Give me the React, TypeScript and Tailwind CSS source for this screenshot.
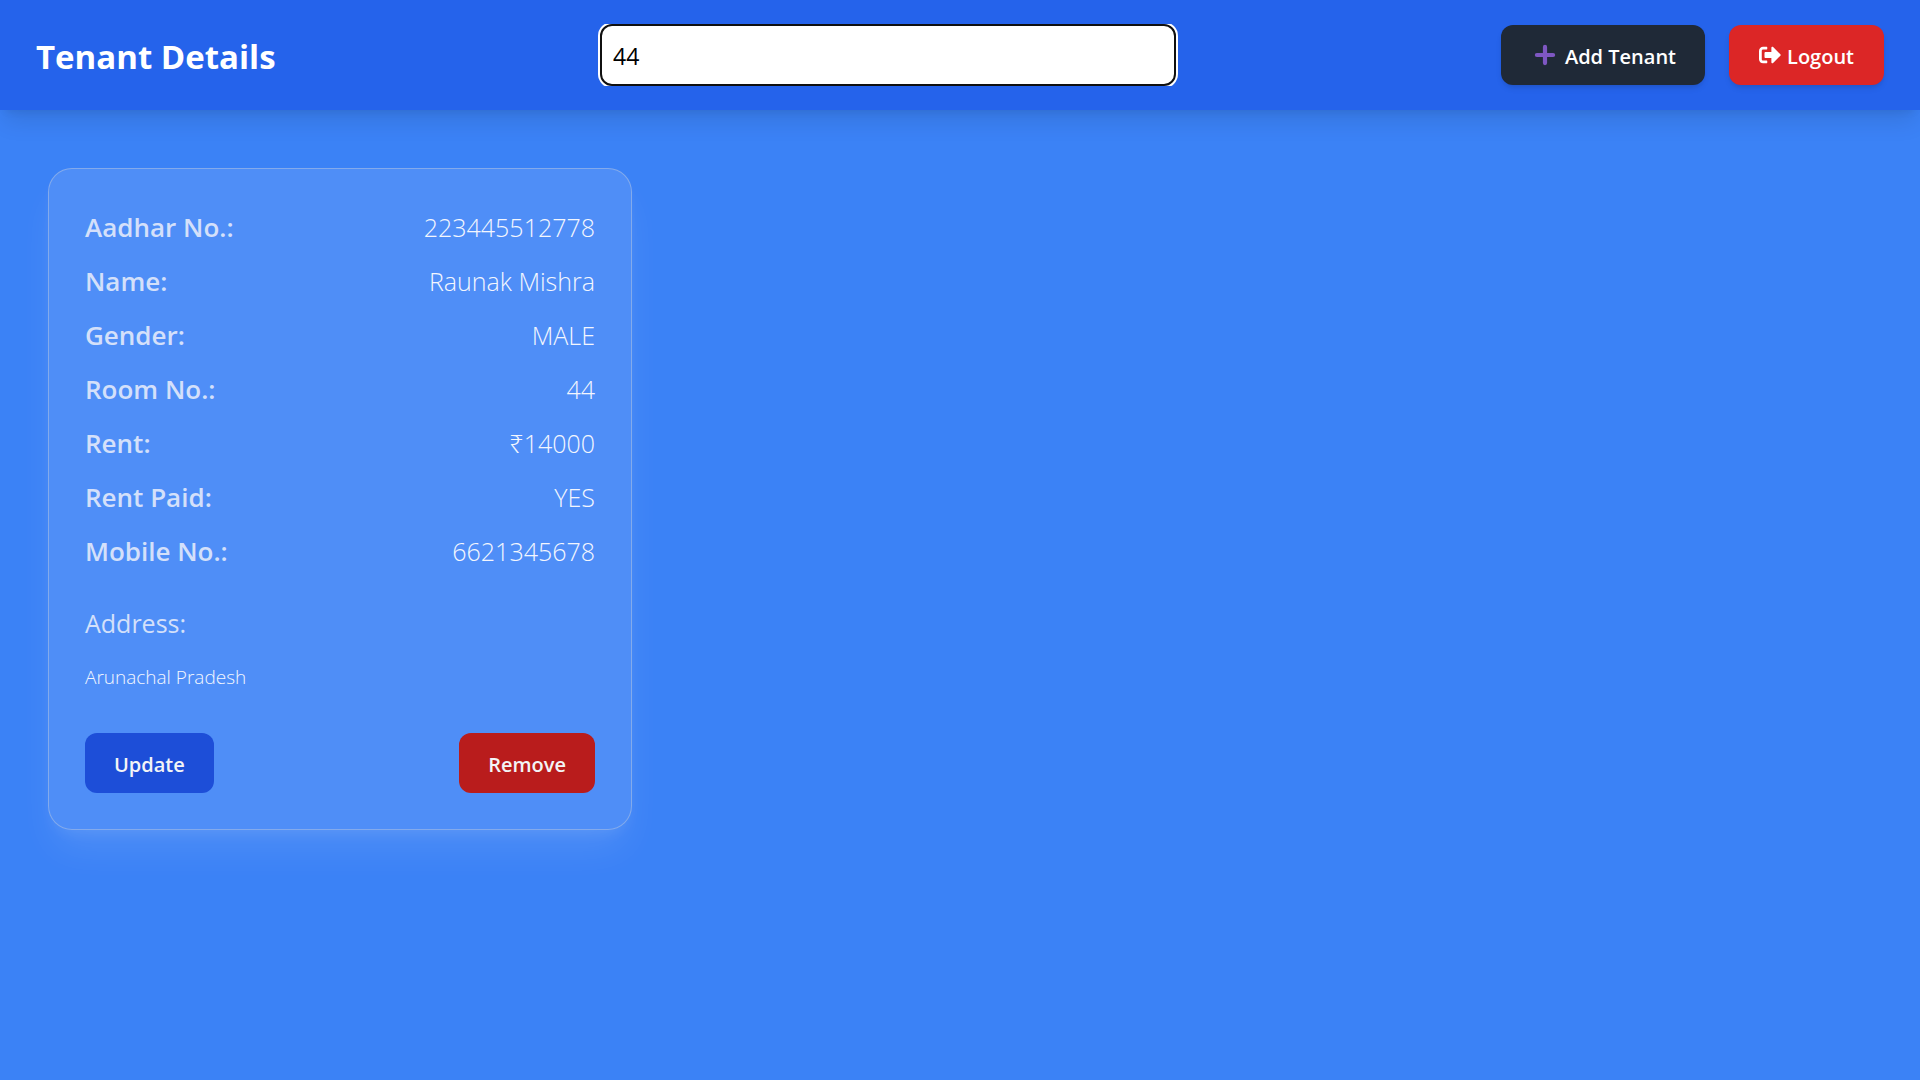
import { useState } from "react";
import { FaSignOutAlt } from "react-icons/fa";

const details = [
  ["Aadhar No.:", "223445512778"],
  ["Name:", "Raunak Mishra"],
  ["Gender:", "MALE"],
  ["Room No.:", "44"],
  ["Rent:", "₹14000"],
  ["Rent Paid:", "YES"],
  ["Mobile No.:", "6621345678"],
];

function PlusIcon() {
  return (
    <svg viewBox="0 0 24 24" className="mr-2 size-6" aria-hidden="true">
      <path d="M12 3.9v16.2M3.9 12h16.2" stroke="#7e57c2" strokeWidth="4.2" strokeLinecap="round" />
    </svg>
  );
}

function Header() {
  const [query, setQuery] = useState("44");
  return (
    <header className="flex items-center justify-between bg-[#2563eb] px-9 py-6 shadow-[0_15px_22px_-4px_rgba(0,0,0,0.1),0_6px_9px_-6px_rgba(0,0,0,0.1)]">
      <h1 className="pt-1 text-[33px] leading-12 font-bold">Tenant Details</h1>
      <div className="w-[31.4%] overflow-hidden px-0.5">
        <input
          type="text"
          aria-label="Search tenants"
          value={query}
          onChange={(e) => setQuery(e.target.value)}
          className="block h-[62px] w-full rounded-xl border-2 border-[#101010] bg-white px-[11px] pt-0.5 text-[23px] text-black ring-2 ring-white outline-none"
        />
      </div>
      <div className="flex gap-6">
        <button className="flex h-[60px] items-center rounded-xl bg-[#1f2937] pr-[29px] pl-8 text-[20px] font-semibold shadow-md">
          <PlusIcon />
          <span className="pt-1">Add Tenant</span>
        </button>
        <button className="flex h-[60px] items-center gap-1.5 rounded-xl bg-[#dc2626] px-[30px] text-[20px] font-semibold shadow-md">
          <FaSignOutAlt className="size-[22px]" />
          <span className="pt-1">Logout</span>
        </button>
      </div>
    </header>
  );
}

function TenantCard() {
  return (
    <article className="rounded-3xl border border-[#d1d5db]/40 bg-white/10 p-9 shadow-[0_24px_38px_-6px_rgba(255,255,255,0.1),0_8px_16px_-6px_rgba(255,255,255,0.1)]">
      <dl className="flex flex-col gap-2.5">
        {details.map(([label, value]) => (
          <div key={label} className="flex justify-between leading-11">
            <dt className="text-[26px] font-semibold text-[#d4e0fa]">{label}</dt>
            <dd className="text-[25px] font-light text-[#f3f6fe]">{value}</dd>
          </div>
        ))}
      </dl>
      <h2 className="mt-7 text-[25px] leading-11 text-[#d4e0fa]">Address:</h2>
      <p className="mt-2.5 text-[19px] leading-11 font-light text-[#f3f6fe]">Arunachal Pradesh</p>
      <div className="mt-[34px] flex justify-between">
        <button className="h-[60px] rounded-xl bg-[#1d4ed8] px-[29px] pt-1 text-[20px] font-semibold text-[#f3f4f6]">
          Update
        </button>
        <button className="h-[60px] rounded-xl bg-[#b91c1c] px-[29px] pt-1 text-[20px] font-semibold text-[#f3f4f6]">
          Remove
        </button>
      </div>
    </article>
  );
}

export default function App() {
  return (
    <div className="min-h-screen bg-[#3b82f6] font-['Open_Sans','Noto_Sans',sans-serif] text-white">
      <Header />
      <main className="grid grid-cols-3 gap-9 px-12 pt-[58px] pb-12">
        <TenantCard />
      </main>
    </div>
  );
}
